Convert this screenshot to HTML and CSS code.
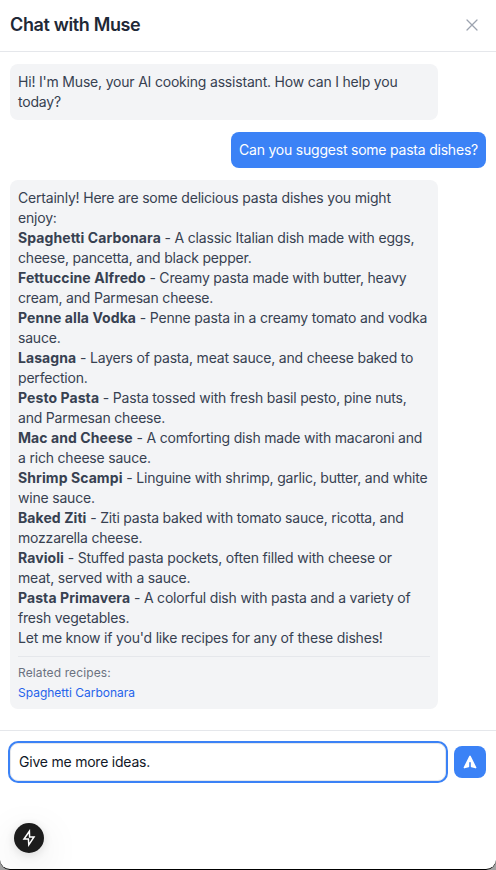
FILE: index.html
```html
<!DOCTYPE html>
<html lang="en">
<head>
<meta charset="utf-8">
<title>Chat with Muse</title>
<link rel="stylesheet" href="styles.css">
</head>
<body>
<main class="chat">
  <header class="header">
    <h1 class="title">Chat with Muse</h1>
    <button class="close" aria-label="Close">
      <svg width="20" height="20" viewBox="0 0 24 24" fill="none" stroke="currentColor" stroke-width="1.5" stroke-linecap="round" stroke-linejoin="round"><path d="M6 18 18 6M6 6l12 12"/></svg>
    </button>
  </header>
  <section class="messages">
    <div class="bubble">Hi! I'm Muse, your AI cooking assistant. How can I help you today?</div>
    <div class="bubble bubble-user">Can you suggest some pasta dishes?</div>
    <div class="bubble">
      <p>Certainly! Here are some delicious pasta dishes you might enjoy:</p>
      <ul class="dishes">
        <li><strong>Spaghetti Carbonara</strong> - A classic Italian dish made with eggs, cheese, pancetta, and black pepper.</li>
        <li><strong>Fettuccine Alfredo</strong> - Creamy pasta made with butter, heavy cream, and Parmesan cheese.</li>
        <li><strong>Penne alla Vodka</strong> - Penne pasta in a creamy tomato and vodka sauce.</li>
        <li><strong>Lasagna</strong> - Layers of pasta, meat sauce, and cheese baked to perfection.</li>
        <li><strong>Pesto Pasta</strong> - Pasta tossed with fresh basil pesto, pine nuts, and Parmesan cheese.</li>
        <li><strong>Mac and Cheese</strong> - A comforting dish made with macaroni and a rich cheese sauce.</li>
        <li><strong>Shrimp Scampi</strong> - Linguine with shrimp, garlic, butter, and white wine sauce.</li>
        <li><strong>Baked Ziti</strong> - Ziti pasta baked with tomato sauce, ricotta, and mozzarella cheese.</li>
        <li><strong>Ravioli</strong> - Stuffed pasta pockets, often filled with cheese or meat, served with a sauce.</li>
        <li><strong>Pasta Primavera</strong> - A colorful dish with pasta and a variety of fresh vegetables.</li>
      </ul>
      <p>Let me know if you'd like recipes for any of these dishes!</p>
      <div class="related">
        <p class="related-label">Related recipes:</p>
        <a class="related-link">Spaghetti Carbonara</a>
      </div>
    </div>
  </section>
  <form class="composer">
    <input class="input" type="text" value="Give me more ideas." aria-label="Message">
    <button class="send" type="button" aria-label="Send">
      <svg width="16" height="16" viewBox="0 0 20 20" fill="currentColor"><path d="M10.894 2.553a1 1 0 00-1.788 0l-7 14a1 1 0 001.169 1.409l5-1.429A1 1 0 009 15.571V11a1 1 0 112 0v4.571a1 1 0 00.725.962l5 1.428a1 1 0 001.17-1.408l-7-14z"/></svg>
    </button>
  </form>
  <div class="badge">
    <svg width="16" height="18" viewBox="0 0 16 18" fill="none" stroke="currentColor" stroke-width="1.5" stroke-linejoin="miter"><path d="M8.4 2.2 3 10H7.4L7.8 15.8 13 8H8.6Z"/></svg>
  </div>
</main>
</body>
</html>
```

FILE: styles.css
```css
* { box-sizing: border-box; margin: 0; padding: 0; }
body {
  height: 870px;
  overflow: hidden;
  background: linear-gradient(#a3a3a3, #a3a3a3);
  font-family: Inter, "Liberation Sans", sans-serif;
  font-size: 14px;
  line-height: 20px;
  letter-spacing: -0.195px;
  color: #374151;
}
button { border: 0; background: none; }
svg { display: block; }
.chat {
  position: relative;
  display: flex;
  flex-direction: column;
  height: 870px;
  background: #fff;
  border-bottom: 1px solid #000;
  border-radius: 0 0 10px 10px;
}
.header {
  display: flex;
  align-items: center;
  justify-content: space-between;
  height: 52px;
  padding: 0 14px 2px 10px;
  border-bottom: 1px solid #e5e7eb;
}
.title { font-size: 18px; line-height: 28px; font-weight: 600; letter-spacing: -0.36px; color: #1f2937; }
.close { width: 20px; height: 20px; color: #9ca3af; }
.messages {
  display: flex;
  flex-direction: column;
  align-items: flex-start;
  gap: 12px;
  height: 678px;
  padding: 12px 10px;
}
.bubble {
  max-width: 428px;
  padding: 8px;
  border-radius: 8px;
  background: #f3f4f6;
}
.bubble-user { align-self: flex-end; background: #3b82f6; color: #fff; letter-spacing: -0.215px; }
.dishes { list-style: none; }
strong { font-weight: 700; letter-spacing: 0.08px; }
.related {
  margin-top: 8px;
  padding-top: 8px;
  border-top: 1px solid #e5e7eb;
  font-size: 12px;
  line-height: 16px;
  letter-spacing: 0;
}
.related-label { margin-bottom: 4px; letter-spacing: 0.12px; color: #6b7280; }
.related-link { display: block; color: #2563eb; }
.composer {
  display: flex;
  align-items: center;
  gap: 8px;
  padding: 12px 10px;
  border-top: 1px solid #e5e7eb;
}
.input {
  flex: 1;
  min-width: 0;
  height: 38px;
  padding: 7px 8px 9px;
  border: 1px solid #e5e7eb;
  border-radius: 8px;
  outline: 0;
  box-shadow: 0 0 0 2px #3b82f6;
  background: #fff;
  font: inherit;
  letter-spacing: -0.22px;
  color: #111827;
}
.send {
  display: flex;
  align-items: center;
  justify-content: center;
  width: 32px;
  height: 32px;
  border-radius: 8px;
  background: #3b82f6;
  color: #fff;
}
.badge {
  position: absolute;
  left: 14px;
  bottom: 16px;
  display: flex;
  align-items: center;
  justify-content: center;
  width: 30px;
  height: 30px;
  border-radius: 50%;
  background: #1c1c1c;
  color: #fff;
  box-shadow: 0 11px 40px rgba(0, 0, 0, .12), 0 2px 10px rgba(0, 0, 0, .12);
}
```
